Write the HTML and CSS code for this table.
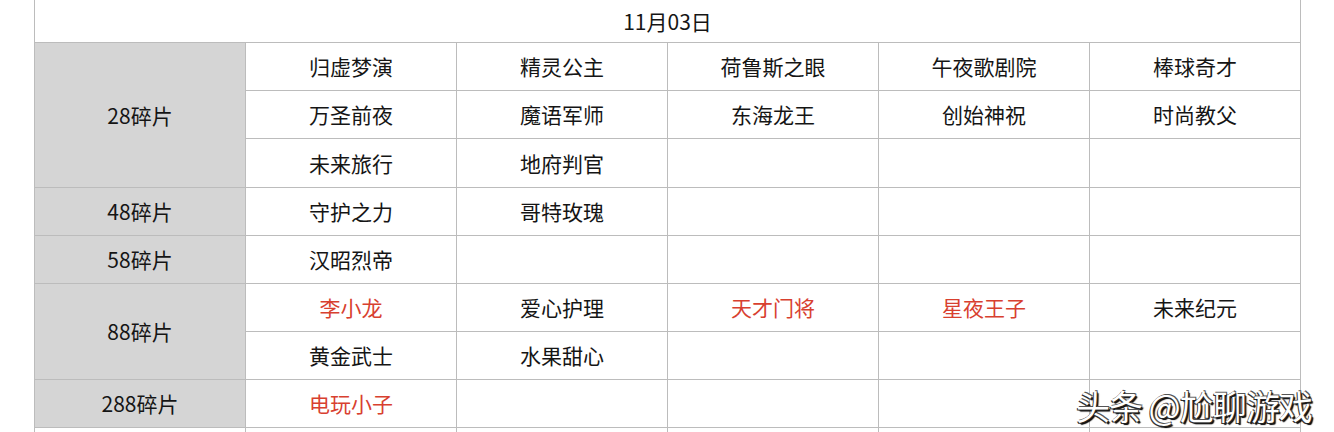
FILE: index.html
```html
<!DOCTYPE html>
<html lang="zh">
<head>
<meta charset="utf-8">
<link rel="stylesheet" href="styles.css">
</head>
<body>
<div class="page">
<table class="grid">
  <colgroup>
    <col class="c"><col class="c"><col class="c"><col class="c"><col class="c"><col class="c">
  </colgroup>
  <tr class="head"><td colspan="6">11月03日</td></tr>
  <tr><th rowspan="3">28碎片</th><td>归虚梦演</td><td>精灵公主</td><td>荷鲁斯之眼</td><td>午夜歌剧院</td><td>棒球奇才</td></tr>
  <tr><td>万圣前夜</td><td>魔语军师</td><td>东海龙王</td><td>创始神祝</td><td>时尚教父</td></tr>
  <tr class="tall"><td>未来旅行</td><td>地府判官</td><td></td><td></td><td></td></tr>
  <tr><th>48碎片</th><td>守护之力</td><td>哥特玫瑰</td><td></td><td></td><td></td></tr>
  <tr><th>58碎片</th><td>汉昭烈帝</td><td></td><td></td><td></td><td></td></tr>
  <tr><th rowspan="2">88碎片</th><td class="red">李小龙</td><td>爱心护理</td><td class="red">天才门将</td><td class="red">星夜王子</td><td>未来纪元</td></tr>
  <tr><td>黄金武士</td><td>水果甜心</td><td></td><td></td><td></td></tr>
  <tr><th>288碎片</th><td class="red">电玩小子</td><td></td><td></td><td></td><td></td></tr>
  <tr class="tail"><td></td><td></td><td></td><td></td><td></td><td></td></tr>
</table>
<div class="mark">头条 @尬聊游戏</div>
</div>
</body>
</html>
```
FILE: styles.css
```css
html, body {
  margin: 0;
  padding: 0;
  background: #fff;
  overflow: hidden;
}
.page {
  position: relative;
  width: 1334px;
  height: 432px;
  overflow: hidden;
  font-family: "Noto Sans CJK SC", "Liberation Sans", sans-serif;
}
.grid {
  border-collapse: collapse;
  table-layout: fixed;
  width: 1267px;
  margin-left: 34px;
  margin-top: -1px;
}
.grid .c { width: 211px; }
.grid td, .grid th {
  border: 1px solid #bcbcbc;
  height: 47px;
  padding: 0;
  text-align: center;
  vertical-align: middle;
  font-size: 21px;
  font-weight: 400;
  color: #151515;
  line-height: 1;
}
.grid th {
  background: #d5d5d5;
}
.grid tr.head td {
  height: 42px;
  font-size: 21px;
}
.grid tr.tall td { height: 48px; }
.grid td.red { color: #d8402f; }
.grid tr.tail td { height: 40px; }
.mark {
  position: absolute;
  left: 1076px;
  top: 381px;
  font-size: 34px;
  color: #fff;
  letter-spacing: -1px;
  text-shadow: 1px 1px 0 #222, -1px 1px 0 #333, 1px -1px 0 #555, 2px 2px 1px #000;
  white-space: nowrap;
}
```
